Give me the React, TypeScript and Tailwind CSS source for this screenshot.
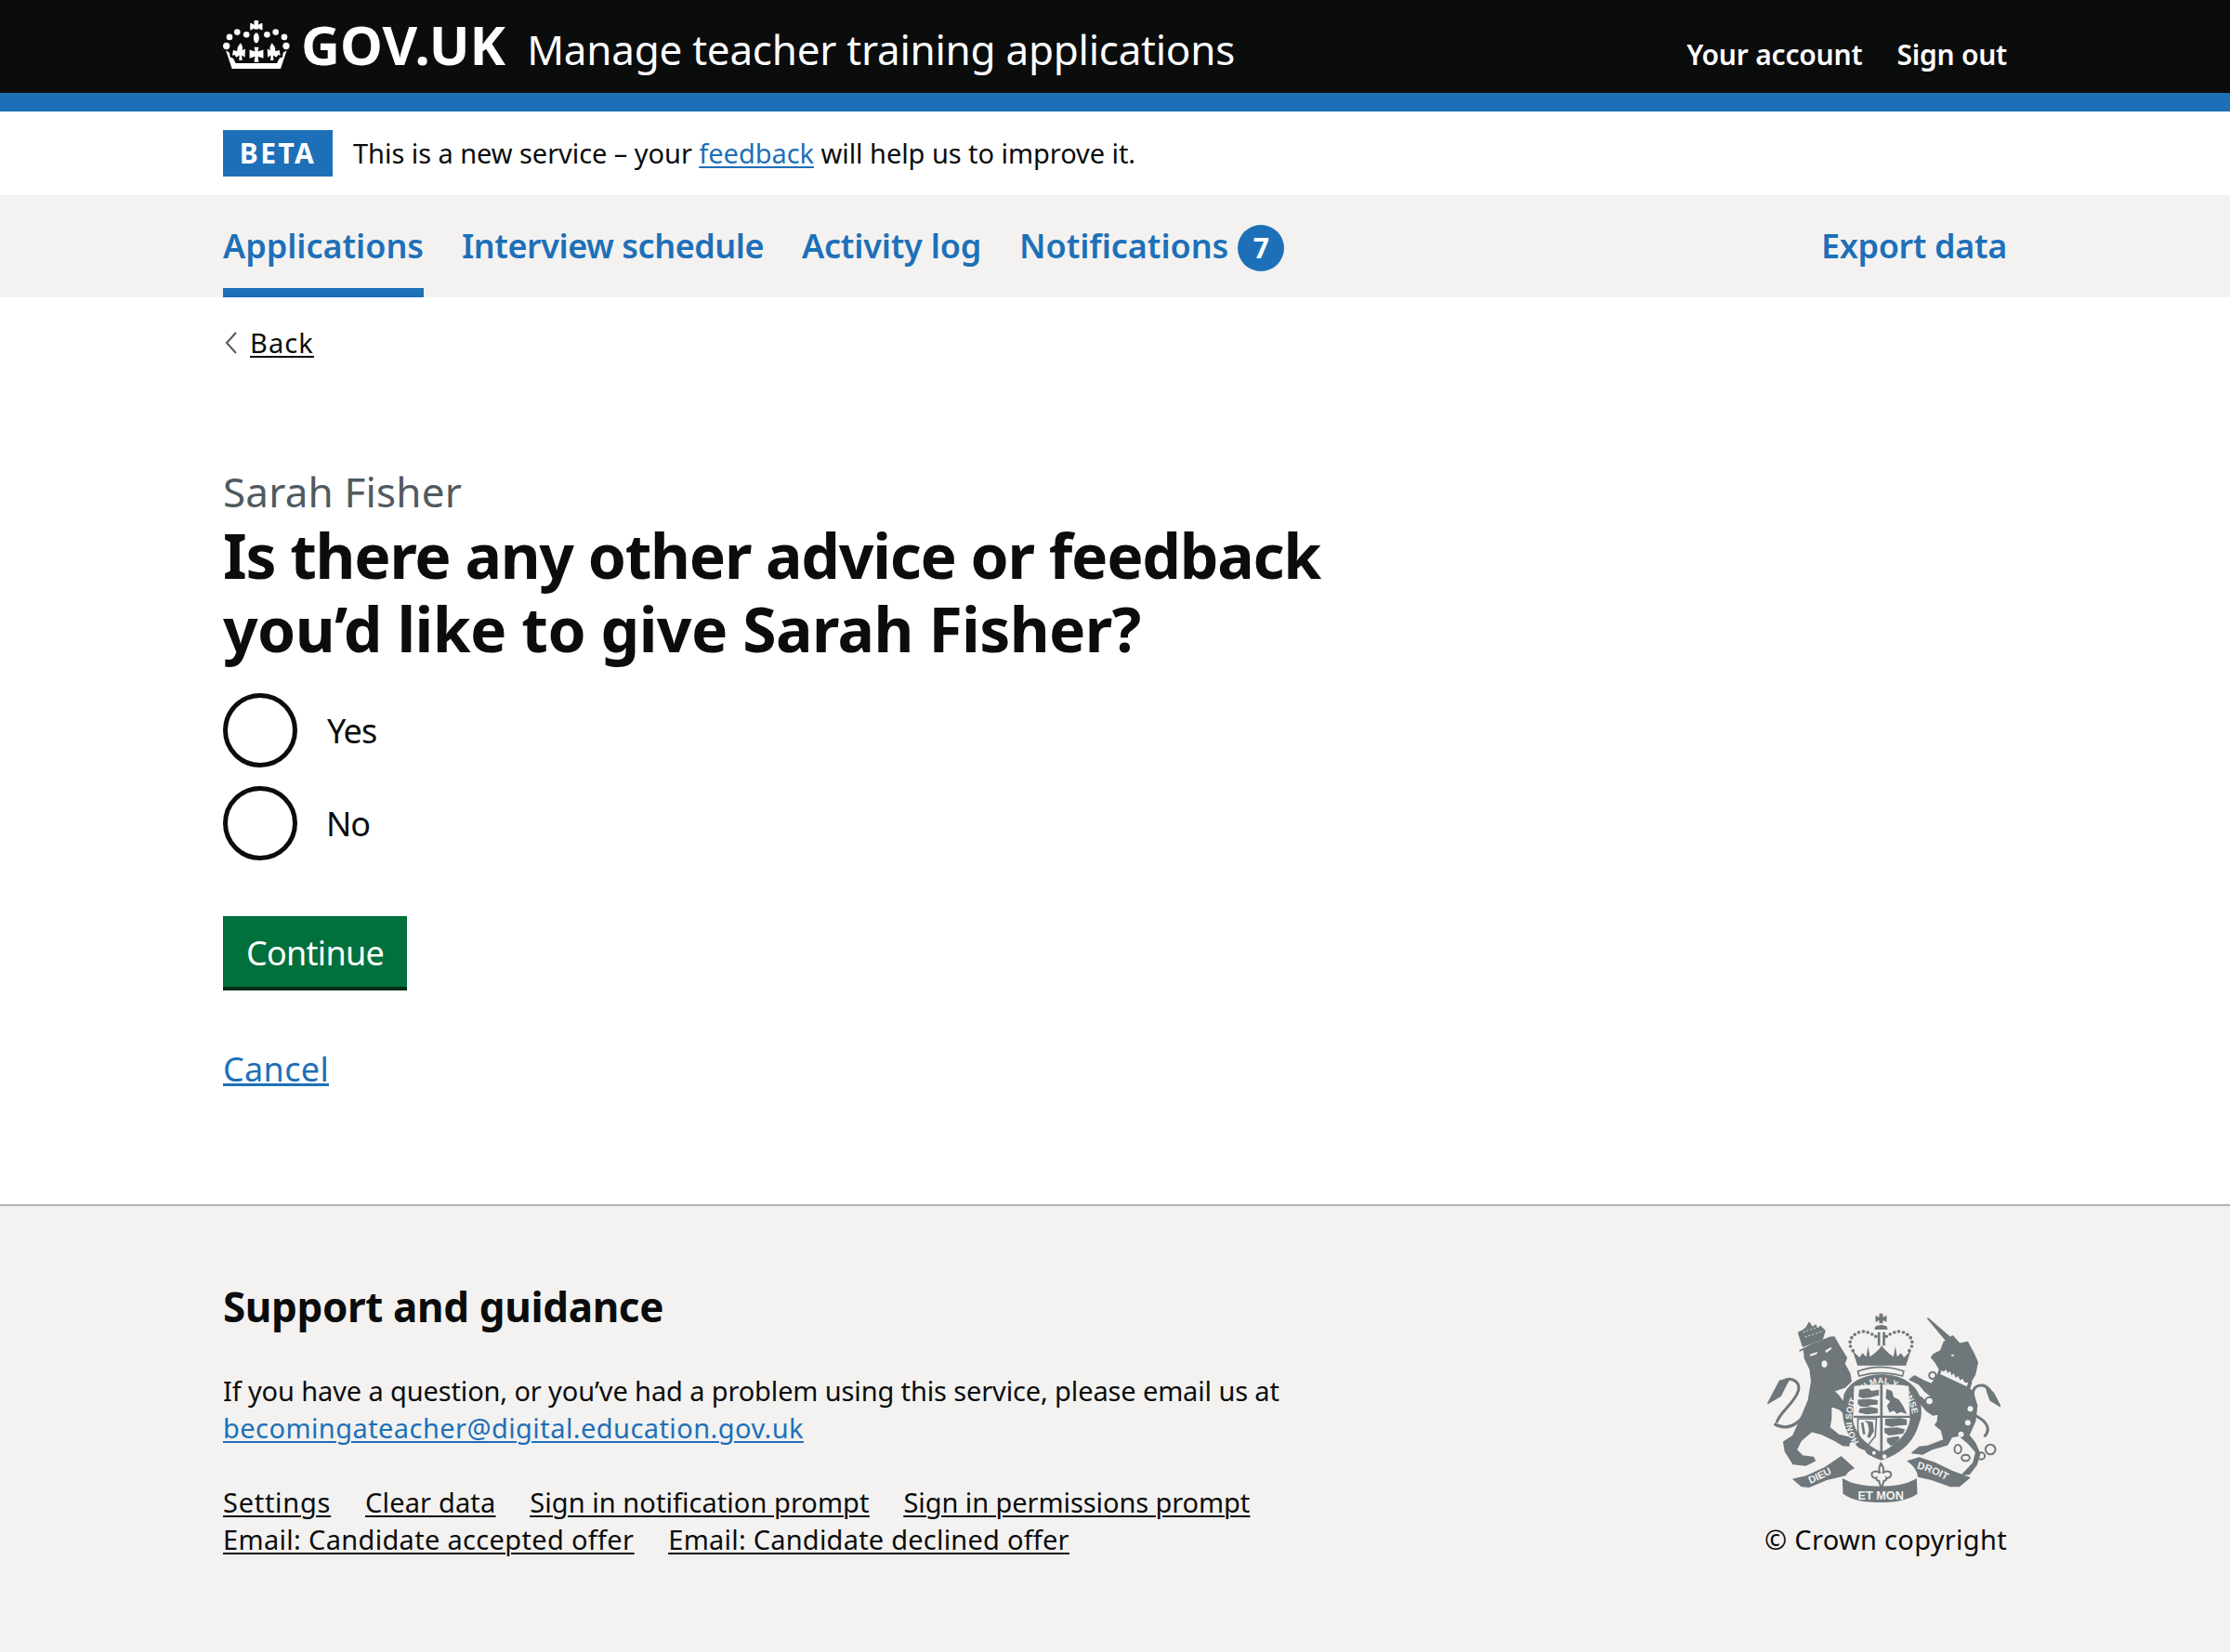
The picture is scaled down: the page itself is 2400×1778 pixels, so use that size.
function Crown() {
  return (
    <svg viewBox="30 35 215 157" className="w-[72px] h-[52px] fill-white shrink-0 self-start mt-[22px]" aria-hidden="true">
      <circle cx="40" cy="118" r="11" /><circle cx="50" cy="89" r="10" /><circle cx="75" cy="73" r="10" /><circle cx="105" cy="81" r="10" />
      <circle cx="172" cy="81" r="10" /><circle cx="200" cy="73" r="10" /><circle cx="228" cy="89" r="10" /><circle cx="234" cy="118" r="11" />
      <path d="M130 35h14v14l9-5h4v22h-4l-9-6v4h-14v-4l-9 6h-4V44h4l9 5z" />
      <ellipse cx="137" cy="92" rx="9" ry="17" />
      <path d="M86 108c5 8 9 14 5 24l10-5-1 28-10-7 1 17-10 0 1-17-10 7 -6-8-7 2 3-18 9 4 5-3c-3-10 5-16 10-24z" />
      <path d="M188 108c-5 8-9 14-5 24l-10-5 1 28 10-7-1 17 10 0-1-17 10 7 6-8 7 2-3-18-9 4-5-3c3-10-5-16-10-24z" />
      <path d="M130 122h15l-3 14 18-6v28l-18-6 3 18h-15l3-18-18 6v-28l18 6z" />
      <path d="M38 132l12 8 2 14 10 4 8 16h134l8-16 10-4 2-14 12-8-20 60H58z" />
    </svg>
  );
}

function Crest() {
  const bg = "#f3f2f1";
  const ink = "#6f777b";
  return (
    <svg viewBox="70 70 752 612" className="mr-[7px] w-[251px] h-[204px] fill-[#6f777b]" aria-hidden="true">
      <g stroke={ink} strokeWidth="5" strokeLinejoin="round">
        <path d="M196 118l9-16 9 16 12-8 3 13 12-9 14 14-8 26-62 24-10-30-4-14 13-6z" />
        <path d="M175 192l40-20 55-22 15-2 15 27 25 40-7 20 17 30 5 25-20 20-30 10 18 30 32 34 5 12-8 14-22-18-10-10-30-12 0 40-5 30 30 25 45 10-2 10-10 4 0 10-20-2-25-15-40-20-35-10-35 30-15 30 20 20 35 5 5 10-30 15-40-5-25-40-5-30 30-20 25-55 25-60 10-60-5-40-17-35-3-30z" />
        <path d="M142 282L110 290L72 362L112 338L130 302Z" />
        <path d="M588 88L660 150L650 162Z" />
        <path d="M640 165L668 145L690 170L716 165L735 200L748 230L740 268L726 292L625 250L612 228L600 214L606 205L630 192Z" />
        <path d="M628 248L728 294L720 322L618 274Z" />
        <path d="M618 274L600 300L575 290L545 274L530 285L560 300L578 322L608 346L598 372L565 342L540 332L560 356L584 386L606 400L622 395L620 420L612 432L632 448L640 480L590 500L560 504L538 522L570 526L600 510L650 496L665 470L690 466L720 492L744 520L735 555L700 592L722 590L745 560L755 525L740 490L720 465L740 420L746 370L732 322Z" />
        <path d="M775 305L800 330L822 372L790 352L782 330Z" />
      </g>
      <path d="M186 132l58-20M192 148l58-20" stroke={bg} strokeWidth="3" fill="none" strokeDasharray="5 7" />
      <ellipse cx="254" cy="235" rx="9" ry="11" fill={bg} />
      <path d="M205 205l26-9-1 7-20 7zM256 192l20-12 0 8-16 11z" fill={bg} />
      <path d="M290 322l52 50" stroke={bg} strokeWidth="4" />
      <path d="M192 392C172 432 130 452 92 428" fill="none" stroke={ink} strokeWidth="10" />
      <path d="M100 425C105 395 160 360 170 320C176 295 150 275 125 288" fill="none" stroke={ink} strokeWidth="9" />
      <ellipse cx="668" cy="207" rx="5" ry="3" fill={bg} />
      <path d="M632 256L640 260L646 252L652 264L660 258L664 272L672 266L678 280L686 274L692 288L700 282L706 294L718 296L714 308L628 268Z" fill={bg} />
      <circle cx="603" cy="272" r="11" fill={bg} stroke={ink} strokeWidth="6" />
      <circle cx="593" cy="355" r="13" fill={bg} stroke={ink} strokeWidth="6" />
      <circle cx="725" cy="380" r="12" fill={bg} stroke={ink} strokeWidth="6" />
      <circle cx="717" cy="425" r="9" fill={bg} /><circle cx="695" cy="462" r="9" fill={bg} />
      <g fill="none" stroke={ink} strokeWidth="6">
        <ellipse cx="685" cy="510" rx="11" ry="14" /><ellipse cx="710" cy="538" rx="13" ry="10" /><ellipse cx="760" cy="532" rx="12" ry="11" /><circle cx="790" cy="511" r="16" />
      </g>
      <path d="M735 398C770 415 798 440 770 470" fill="none" stroke={ink} strokeWidth="9" />
      <path d="M745 372C725 335 730 302 765 304C790 310 795 335 800 345" fill="none" stroke={ink} strokeWidth="9" />
      <path d="M431 72h12v12l12-6v22l-12-6v10h-12v-10l-12 6V78l12 6z" />
      <path d="M418 114q20-10 38 0l2 10h-42z" />
      <path d="M426 132h8v44h-8zM442 132h8v44h-8z" />
      {[[346,192],[338,178],[337,164],[342,150],[352,140],[365,133],[380,130],[394,133],[408,139],[420,146],[454,146],[466,139],[480,133],[494,130],[509,133],[522,140],[532,150],[537,164],[536,178],[528,192]].map(([x, y]) => (
        <circle key={x * 1000 + y} cx={x} cy={y} r="5.5" />
      ))}
      <path d="M345 192l22 22 10-14 12 12 6-34 6 34 16-12 14-14 8-10 8 10 14 14 16 12 6-34 6 34 12-12 10 14 22-22-16 48H361z" />
      <path d="M318 330q30-58 120-62q92 4 122 66q14 64 0 92q-24 88-122 120q-96-30-120-118q-12-50 0-98z" />
      <path d="M362 258q76-26 148 0l-4 16q-70-20-140 0z" fill={bg} stroke={ink} strokeWidth="5" />
      <path d="M350 306q86-10 176 0l4 110q-10 62-92 104q-82-40-92-104z" fill={bg} />
      <path id="garter" d="M366 487A98 114 0 1 1 514 487" fill="none" />
      <text fill={bg} fontFamily="Liberation Sans" fontWeight="700" fontSize="28"><textPath href="#garter">HONI SOIT QUI MAL Y PENSE</textPath></text>
      <path d="M434 300h8v222h-8zM348 402h184v7H348z" />
      <path d="M366 318l30-4 10 8 24-4 0 18-16 4-14 4-22 2-14-6zM362 350l40-2 24 4 0 14-22 2-12 6-22-2-8-8zM368 378l34-4 24 4 0 16-36 4-26-6z" />
      <path d="M454 316l18 6 6 20 16 8 14 20 12 26-20-6-12 6-10-10-14 6-8-22 10-14-14-10z" />
      <path d="M362 412h60l-4 56-24 30c-20-10-30-30-32-48z" fill="none" stroke={ink} strokeWidth="5" />
      <path d="M384 418l26 4 4 30-14 22-8-4 6-20-4-22zM372 424l8 0 6 38-8 0z" />
      <path d="M450 412l50-2 20 4 0 18-26 2-24 4-20-6zM448 442l40-2 26 6-6 14-26 4-20 2-14-10zM456 474l36-6 6 6-14 18-16 8-12-14z" />
      <path d="M360 505l24 8 10 16-22 4z" fill={bg} />
      <circle cx="414" cy="522" r="6" fill={bg} /><circle cx="448" cy="534" r="7" fill={bg} />
      <path d="M436 556c10 12 12 22 6 32 8-8 18-8 26-2 4 10-4 20-14 16 2 6-2 10-8 10l-6 20-4 0-6-20c-6 0-10-4-8-10-10 4-18-6-14-16 8-6 18-6 26 2-6-10-4-20 2-32z" fill={bg} stroke={ink} strokeWidth="6" />
      <path d="M150 606L195 596L255 568L308 532L352 572Q332 580 322 596L262 610L205 634L180 632Z" />
      <path d="M520 548L560 536L610 552L668 580L726 602L690 632L660 632L600 610L556 600Q552 570 520 548Z" />
      <path d="M312 604c30 18 70 26 124 26 48 0 88-8 116-26l2 50c-28 20-70 28-118 28-52 0-96-8-122-28z" />
      <path id="ribL" d="M208 622Q262 600 314 566" fill="none" />
      <text fill={bg} fontFamily="Liberation Sans" fontWeight="700" fontSize="33"><textPath href="#ribL">DIEU</textPath></text>
      <path id="ribR" d="M552 572Q610 586 670 626" fill="none" />
      <text fill={bg} fontFamily="Liberation Sans" fontWeight="700" fontSize="33"><textPath href="#ribR">DROIT</textPath></text>
      <text x="436" y="673" textAnchor="middle" fill={bg} fontFamily="Liberation Sans" fontWeight="700" fontSize="38">ET MON</text>
    </svg>
  );
}

export default function App() {
  return (
    <div className="min-h-[1778px] flex flex-col bg-white text-[#0b0c0c] font-['Noto_Sans',sans-serif] text-[29px] leading-[40px]">
      <header className="h-[100px] bg-[#0b0c0c] text-white">
        <div className="w-[1920px] mx-auto flex items-baseline">
          <Crown />
          <span className="ml-[12px] pt-[18px] text-[58px] leading-[60px] font-bold tracking-[0.1px]">GOV.UK</span>
          <span className="ml-[23px] text-[44px] leading-[50px] tracking-[-0.25px]">Manage teacher training applications</span>
          <nav className="ml-auto flex gap-[37px] text-[30px] leading-[40px] font-semibold">
            <a className="tracking-[-0.2px]">Your account</a>
            <a className="tracking-[-0.25px]">Sign out</a>
          </nav>
        </div>
      </header>
      <div className="h-[20px] bg-[#1d70b8]" />
      <div className="h-[90px]">
        <div className="w-[1920px] mx-auto h-full flex items-center">
          <strong className="w-[118px] h-[50px] flex items-center justify-center bg-[#1d70b8] text-white text-[30px] leading-[40px] font-bold tracking-[2.4px]">BETA</strong>
          <p className="ml-[22px] tracking-[-0.05px]">
            This is a new service – your <a className="text-[#1d70b8] underline decoration-2 underline-offset-[3px]">feedback</a> will help us to improve it.
          </p>
        </div>
      </div>
      <nav className="h-[110px] bg-[#f3f2f1] text-[36px] leading-[40px] font-semibold text-[#1d70b8]">
        <div className="w-[1920px] mx-auto h-full flex">
          <a className="h-full pt-[35px] border-b-[10px] border-[#1d70b8] tracking-[-0.04px]">Applications</a>
          <a className="ml-[41px] pt-[35px] tracking-[-0.48px]">Interview schedule</a>
          <a className="ml-[41px] pt-[35px] tracking-[-0.22px]">Activity log</a>
          <a className="ml-[41px] pt-[35px] tracking-[-0.05px]">Notifications</a>
          <span className="ml-[10px] mt-[32px] w-[50px] h-[50px] rounded-full bg-[#1d70b8] text-white text-[30px] leading-[50px] text-center font-bold">7</span>
          <a className="ml-auto pt-[35px] tracking-[-0.35px]">Export data</a>
        </div>
      </nav>
      <main className="w-[1920px] mx-auto">
        <div className="pt-[29px] flex items-center">
          <svg viewBox="0 0 13 24" className="ml-[2px] w-[13px] h-[24px] fill-none stroke-[#505a5f] stroke-[2]" aria-hidden="true"><path d="M12 1L2 12l10 11" /></svg>
          <a className="ml-[14px] underline decoration-2 underline-offset-[3px] tracking-[1.1px]">Back</a>
        </div>
        <p className="mt-[115px] text-[44px] leading-[50px] text-[#505a5f] tracking-[0.18px]">Sarah Fisher</p>
        <h1 className="mt-[4px] text-[66px] leading-[79px] font-bold">
          <span className="block tracking-[-1.25px]">Is there any other advice or feedback</span>
          <span className="block tracking-[-0.6px]">you’d like to give Sarah Fisher?</span>
        </h1>
        <div className="mt-[30px] flex flex-col gap-[20px] text-[36px] leading-[40px]">
          <label className="flex items-center">
            <span className="w-[80px] h-[80px] rounded-full border-[5px] border-[#0b0c0c]" />
            <span className="ml-[32px] pt-[2px] tracking-[-1px]">Yes</span>
          </label>
          <label className="flex items-center">
            <span className="w-[80px] h-[80px] rounded-full border-[5px] border-[#0b0c0c]" />
            <span className="ml-[31px] pt-[2px] tracking-[-1px]">No</span>
          </label>
        </div>
        <button className="mt-[60px] block w-[198px] h-[80px] pt-[3px] bg-[#00703c] border-b-[4px] border-[#002d18] text-white text-[36px] leading-[40px] tracking-[-0.73px]">Continue</button>
        <a className="block mt-[60px] text-[36px] leading-[50px] text-[#1d70b8] underline decoration-[3px] underline-offset-[2px] tracking-[0.32px]">Cancel</a>
      </main>
      <footer className="mt-[120px] flex-1 bg-[#f3f2f1] border-t-2 border-[#b1b4b6]">
        <div className="w-[1920px] mx-auto pt-[83px] flex justify-between">
          <div>
            <h2 className="text-[44px] leading-[50px] font-bold tracking-[-0.38px]">Support and guidance</h2>
            <p className="mt-[46px] tracking-[-0.13px]">If you have a question, or you’ve had a problem using this service, please email us at</p>
            <a className="block text-[#1d70b8] underline underline-offset-[3px] decoration-2 tracking-[0.43px]">becomingateacher@digital.education.gov.uk</a>
            <div className="mt-[40px] flex gap-[37px] underline decoration-2 underline-offset-[3px]">
              <a className="tracking-[0.72px]">Settings</a>
              <a className="tracking-[0.14px]">Clear data</a>
              <a className="tracking-[0.05px]">Sign in notification prompt</a>
              <a className="tracking-[-0.08px]">Sign in permissions prompt</a>
            </div>
            <div className="flex gap-[37px] underline decoration-2 underline-offset-[3px]">
              <a className="tracking-[0.32px]">Email: Candidate accepted offer</a>
              <a className="tracking-[0.22px]">Email: Candidate declined offer</a>
            </div>
          </div>
          <div className="pt-[32px] flex flex-col items-end">
            <Crest />
            <a className="mt-[20px] tracking-[0.3px]">© Crown copyright</a>
          </div>
        </div>
      </footer>
    </div>
  );
}
